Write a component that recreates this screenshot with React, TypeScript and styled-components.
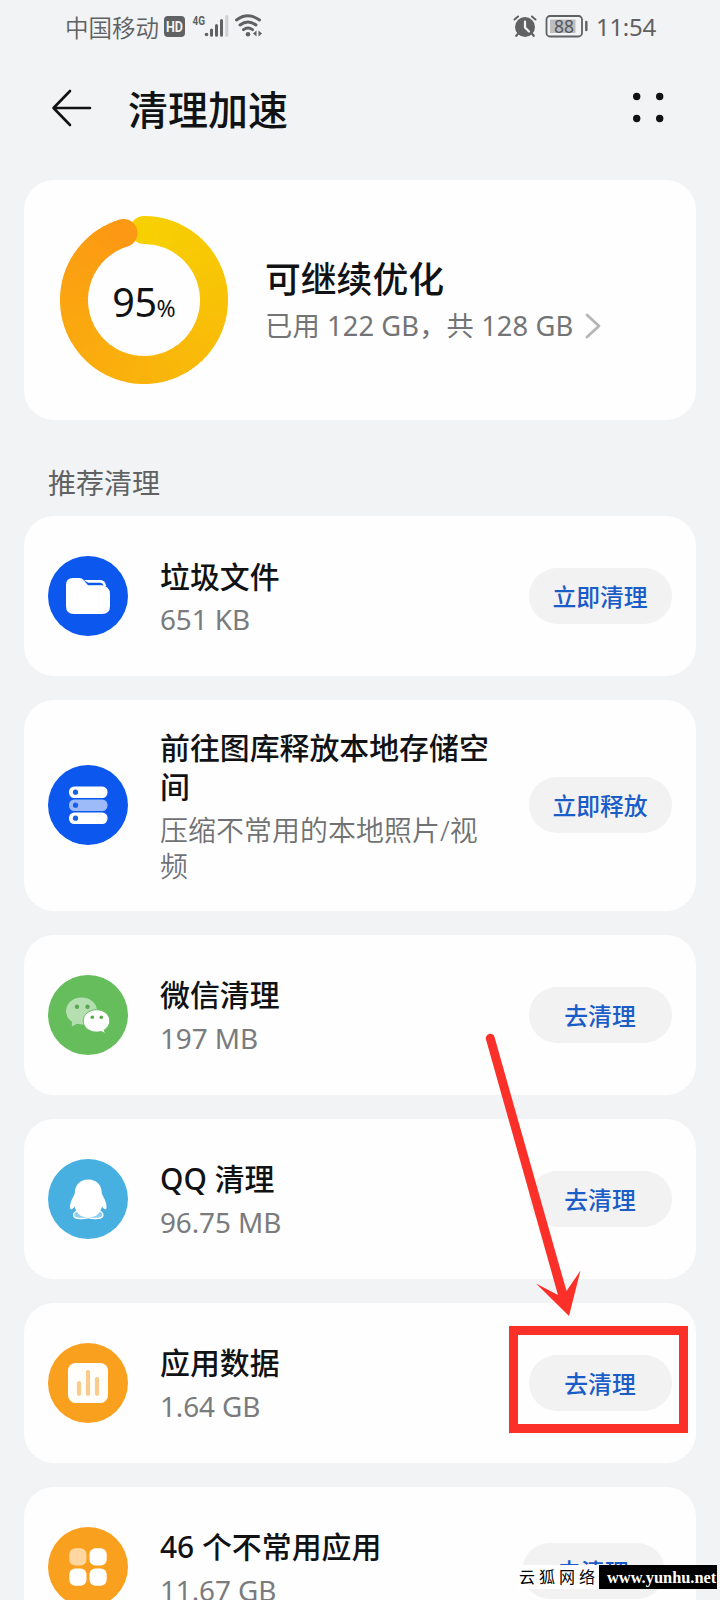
import React from "react";
import styled, { createGlobalStyle } from "styled-components";

const GlobalStyle = createGlobalStyle`
  * { box-sizing: border-box; }
  html, body { margin: 0; padding: 0; }
  body {
    background: #f1f3f5;
    font-family: "Noto Sans", "Noto Sans CJK SC", sans-serif;
    color: #111214;
    overflow: hidden;
  }
`;

const Screen = styled.div`
  position: relative;
  width: 720px;
  height: 1600px;
  overflow: hidden;
  background: #f1f3f5;
`;

const StatusBar = styled.header`
  display: flex;
  align-items: center;
  height: 54px;
  padding: 0 64px 0 65px;
  color: #606163;
`;

const Carrier = styled.span`
  width: 99px;
  font: 350 23.5px/30px "Noto Sans CJK SC", sans-serif;
  white-space: nowrap;
`;

const StatusIcons = styled.svg`
  display: block;
  flex: none;
`;

const Spacer = styled.div`
  flex: 1;
`;

const Clock = styled.span`
  width: 60px;
  margin-left: 8px;
  font: 400 24px/30px "Noto Sans", sans-serif;
  letter-spacing: -0.3px;
  white-space: nowrap;
`;

const TitleBar = styled.div`
  display: flex;
  align-items: center;
  height: 108px;
  padding: 0 55px 0 51px;
`;

const PageTitle = styled.h1`
  flex: 1;
  margin: 0 0 0 36px;
  font: 500 40px/52px "Noto Sans CJK SC", sans-serif;
`;

const Card = styled.section<{ $height: number }>`
  display: flex;
  align-items: center;
  height: ${(p) => p.$height}px;
  padding: 0 24px;
  border-radius: 30px;
  background: #fefefe;
`;

const SummaryCard = styled(Card)`
  margin: 18px 24px 0;
  padding: 0 36px;
`;

const Gauge = styled.div`
  display: grid;
  width: 168px;
  height: 168px;
  place-items: center;
  > * { grid-area: 1 / 1; }
`;

const GaugeValue = styled.div`
  padding-top: 9px;
  font: 400 39.5px/48px "Noto Sans", sans-serif;
  letter-spacing: -0.5px;
  white-space: nowrap;
`;

const Percent = styled.span`
  font-size: 23px;
  letter-spacing: 0;
`;

const SummaryText = styled.div`
  margin-left: 37px;
`;

const SummaryTitle = styled.h2`
  margin: 0;
  font: 500 35.8px/48px "Noto Sans CJK SC", sans-serif;
`;

const SummaryDetail = styled.p`
  display: flex;
  align-items: center;
  margin: 3px 0 0;
  color: #737476;
  font: 400 27.3px/44px "Noto Sans", "Noto Sans CJK SC", sans-serif;
  letter-spacing: 0.1px;
  white-space: nowrap;
  svg { margin-left: 12px; }
`;

const SectionTitle = styled.h3`
  margin: 0;
  height: 96px;
  padding: 42px 48px 0;
  color: #606163;
  font: 400 28px/40px "Noto Sans CJK SC", sans-serif;
`;

const List = styled.main`
  display: flex;
  flex-direction: column;
  gap: 24px;
  padding: 0 24px;
`;

const IconDisc = styled.div<{ $color: string }>`
  flex: none;
  width: 80px;
  height: 80px;
  border-radius: 50%;
  background: ${(p) => p.$color};
  svg { display: block; }
`;

const RowText = styled.div`
  width: 335px;
  margin-left: 32px;
  padding-top: 2px;
`;

const RowTitle = styled.div`
  font: 500 29.9px/39px "Noto Sans", "Noto Sans CJK SC", sans-serif;
`;

const RowDetail = styled.div<{ $light?: boolean }>`
  margin-top: 5.5px;
  color: ${(p) => (p.$light ? "#707173" : "#7a7b7d")};
  font: ${(p) => (p.$light ? 350 : 400)} 27.9px/36.5px "Noto Sans", "Noto Sans CJK SC", sans-serif;
  letter-spacing: ${(p) => (p.$light ? 0.1 : -0.1)}px;
`;

const ActionButton = styled.button<{ $shifted?: boolean }>`
  width: 143px;
  height: 56px;
  margin-left: auto;
  padding: 0 1px 0 0;
  border: 0;
  border-radius: 28px;
  background: #f2f2f2;
  color: #1a5cc8;
  font: 500 23.8px/56px "Noto Sans CJK SC", sans-serif;
  ${(p) => p.$shifted && "transform: translate(-7px, 4px);"}
`;

const Highlight = styled.div`
  position: absolute;
  left: 509px;
  top: 1326px;
  width: 179px;
  height: 107px;
  border: 9px solid #fb3028;
`;

const Pointer = styled.svg`
  position: absolute;
  left: 480px;
  top: 1025px;
`;

const Watermark = styled.footer`
  position: absolute;
  left: 516px;
  top: 1565px;
  display: flex;
  height: 24px;
  white-space: nowrap;
`;

const WatermarkName = styled.span`
  width: 83px;
  padding-left: 3px;
  background: #fff;
  color: #000;
  font: 400 16px/23px "Noto Sans CJK SC", serif;
  letter-spacing: 4px;
`;

const WatermarkUrl = styled.span`
  width: 118px;
  padding-left: 8px;
  background: #000;
  color: #fff;
  font: 700 16.4px/25px "Liberation Serif", serif;
`;

const FolderIcon = () => (
  <svg width="80" height="80" viewBox="0 0 80 80">
    <path d="M36 24h16.500q4.500 0 5.800 6L46 31z" fill="#fff" />
    <path d="M37 26.800h15.500q2 0 3.200 3H40z" fill="#0c58ef" />
    <path d="M18 29q0-7 7-7h6.500q2.300 0 3.800 1.800L40 29.300h12.500q9.500 0 9.500 9.500V50q0 8-8 8H26q-8 0-8-8z" fill="#fff" />
  </svg>
);

const StorageIcon = () => (
  <svg width="80" height="80" viewBox="0 0 80 80">
    {[21.5, 34.5, 47.5].map((y, i) => (
      <g key={y}>
        <rect x="21" y={y} width="38.5" height="11.5" rx="5.2" fill={i === 1 ? "#9dbbf8" : "#fff"} />
        <circle cx="27.5" cy={y + 5.7} r="2.6" fill="#1a5fe8" />
      </g>
    ))}
  </svg>
);

const WeChatIcon = () => (
  <svg width="80" height="80" viewBox="0 0 80 80">
    <path d="M33.5 22.5C24.5 22.5 18 28.5 18 36c0 4.500 2.300 8.300 6 10.800L23.800 51.500l5-2.800q7 1.800 12.500-.3C47 46 49 41 49 36c0-7.500-6.500-13.500-15.500-13.500z" fill="#b5dfb1" />
    <path d="M48.500 34.700c-7.500 0-13.300 5-13.300 11.200s5.800 11.200 13.300 11.200q2.500 0 4.600-.6l4.200 2-1-3.600c3.300-2 5.500-5.300 5.500-9 0-6.200-5.800-11.200-13.300-11.200z" fill="#fff" stroke="#65bd5c" strokeWidth="1" />
    <g fill="#58a950">
      <circle cx="29" cy="31.700" r="2.200" /><circle cx="39.500" cy="31.700" r="2.200" />
      <circle cx="44.300" cy="42.200" r="1.800" /><circle cx="53.300" cy="42.200" r="1.800" />
    </g>
  </svg>
);

const PenguinIcon = () => (
  <svg width="80" height="80" viewBox="0 0 80 80">
    <path d="M29 52c-3.500 1-4.300 4-2.500 6 1.500 1.800 9 2 13.700.6 4.700 1.400 12.300 1.200 13.800-.6 1.800-2 1-5-2.500-6z" fill="#8fcff0" stroke="#fff" strokeWidth="1.300" />
    <path d="M40.300 20.500C31 20.500 26.800 27 26.800 34.500c-2 4.500-5.300 9.500-4.700 14.500.3 2.300 2.500 1.500 4.400-1.500.8 3.500 3 7 6 9.300q7.800 3.400 15.600 0c3-2.300 5.200-5.800 6-9.300 1.900 3 4.100 3.800 4.400 1.500.6-5-2.700-10-4.700-14.500 0-7.500-4.200-14-13.500-14z" fill="#fff" />
  </svg>
);

const ChartIcon = () => (
  <svg width="80" height="80" viewBox="0 0 80 80">
    <rect x="20" y="20" width="40" height="40" rx="7.500" fill="#fffefb" />
    <g stroke="#f9cb8c" strokeWidth="4.200" strokeLinecap="round">
      <path d="M31 40v11M40 29v22M49 36v15" />
    </g>
  </svg>
);

const AppsIcon = () => (
  <svg width="80" height="80" viewBox="0 0 80 80" fill="#fff">
    <rect x="21.300" y="21.300" width="17.200" height="17.200" rx="6" fill="#fdd6a0" />
    <rect x="41.500" y="21.300" width="17.200" height="17.200" rx="6" />
    <rect x="21.300" y="41.500" width="17.200" height="17.200" rx="6" />
    <rect x="41.500" y="41.500" width="17.200" height="17.200" rx="6" />
  </svg>
);

type Item = {
  title: string;
  detail: string;
  action: string;
  color: string;
  icon: React.ReactNode;
  height?: number;
  light?: boolean;
  shifted?: boolean;
};

const items: Item[] = [
  { title: "垃圾文件", detail: "651 KB", action: "立即清理", color: "#0c58ef", icon: <FolderIcon /> },
  { title: "前往图库释放本地存储空间", detail: "压缩不常用的本地照片/视频", action: "立即释放", color: "#0c58ef", icon: <StorageIcon />, height: 210.5, light: true },
  { title: "微信清理", detail: "197 MB", action: "去清理", color: "#65bd5c", icon: <WeChatIcon /> },
  { title: "QQ 清理", detail: "96.75 MB", action: "去清理", color: "#47b0e0", icon: <PenguinIcon /> },
  { title: "应用数据", detail: "1.64 GB", action: "去清理", color: "#f9a01f", icon: <ChartIcon /> },
  { title: "46 个不常用应用", detail: "11.67 GB", action: "去清理", color: "#f9a01f", icon: <AppsIcon />, shifted: true },
];

const polar = (deg: number) => {
  const a = (deg * Math.PI) / 180;
  return [84 + 70 * Math.sin(a), 84 - 70 * Math.cos(a)];
};

const mix = (t: number) => {
  const from = [247, 208, 2];
  const to = [252, 152, 20];
  return `rgb(${from.map((c, i) => Math.round(c + (to[i] - c) * t)).join(",")})`;
};

const Ring = () => {
  const steps = 86;
  const span = 343;
  return (
    <svg width="168" height="168" viewBox="0 0 168 168" fill="none" strokeWidth="28">
      <circle cx={polar(0)[0]} cy={polar(0)[1]} r="14" fill={mix(0)} />
      {Array.from({ length: steps }, (_, i) => {
        const [x1, y1] = polar((i * span) / steps);
        const [x2, y2] = polar(((i + 1) * span) / steps + (i < steps - 1 ? 0.6 : 0));
        return <path key={i} d={`M${x1} ${y1}A70 70 0 0 1 ${x2} ${y2}`} stroke={mix(i / steps)} />;
      })}
      <circle cx={polar(span)[0]} cy={polar(span)[1]} r="14" fill={mix(1)} />
    </svg>
  );
};

const SignalIcons = () => (
  <StatusIcons width="100" height="30" viewBox="0 0 100 30" fill="#606163">
    <rect x="0" y="4" width="21" height="21" rx="4" />
    <text x="10.500" y="19.500" fontSize="14" fontWeight="700" fill="#f1f3f5" textAnchor="middle" fontFamily="Roboto" textLength="17" lengthAdjust="spacingAndGlyphs">HD</text>
    <text x="28.500" y="12.700" fontSize="12.500" fontWeight="700" fontFamily="Roboto" textLength="12.500" lengthAdjust="spacingAndGlyphs">4G</text>
    <circle cx="42.500" cy="22.500" r="1.800" />
    <g stroke="#606163" strokeWidth="3" strokeLinecap="round">
      <path d="M47.500 18v5.200M52.500 13.500v9.700M57.500 8.500v14.700" />
      <path d="M62.800 4.500v18.700" stroke="#cfd0d2" />
    </g>
    <g fill="none" stroke="#606163" strokeWidth="2.900" strokeLinecap="round">
      <path d="M72.500 8q11.500-8.300 23 0M76 13q8-6 16 0M79.500 17.700q4.500-3.500 9 0" />
    </g>
    <circle cx="84" cy="22.300" r="2.300" />
    <path d="M92.500 18.500v6l-3.500-3zM94.500 18.500v6l3.500-3z" />
  </StatusIcons>
);

const DeviceIcons = () => (
  <StatusIcons width="76" height="30" viewBox="0 0 76 30" fill="none" stroke="#606163">
    <circle cx="13" cy="15" r="10" fill="#606163" stroke="none" />
    <path d="M2.500 7.500l3.600-3M23.500 7.500l-3.600-3" strokeWidth="2" strokeLinecap="round" />
    <path d="M5.800 22l-1.500 1.800M20.200 22l1.500 1.800" strokeWidth="2.200" strokeLinecap="round" />
    <path d="M13 9.500v6l4 4" stroke="#f1f3f5" strokeWidth="2.200" strokeLinecap="round" />
    <rect x="34.500" y="4" width="35.500" height="20.500" rx="3.500" strokeWidth="1.800" />
    <rect x="38" y="7.500" width="25.500" height="13.500" fill="#bdbebf" stroke="none" />
    <path d="M74.300 10v8" strokeWidth="2.400" strokeLinecap="round" />
    <text x="52" y="20.700" fontSize="17.500" fontFamily="Noto Sans" fontWeight="400" fill="#55565a" stroke="none" textAnchor="middle">88</text>
  </StatusIcons>
);

export default function App() {
  return (
    <>
      <GlobalStyle />
      <Screen>
        <StatusBar>
          <Carrier>中国移动</Carrier>
          <SignalIcons />
          <Spacer />
          <DeviceIcons />
          <Clock>11:54</Clock>
        </StatusBar>
        <TitleBar>
          <svg width="41" height="38" viewBox="0 0 41 38" fill="none" stroke="#111214" strokeWidth="2.600" strokeLinecap="round" strokeLinejoin="round">
            <path d="M39 19H2.500M19 2L2.500 19 19 36" />
          </svg>
          <PageTitle>清理加速</PageTitle>
          <svg width="32" height="32" viewBox="0 0 32 32" fill="#111214">
            <circle cx="3.700" cy="4.500" r="3.700" /><circle cx="26.700" cy="4.500" r="3.700" />
            <circle cx="3.700" cy="26.500" r="3.700" /><circle cx="26.700" cy="26.500" r="3.700" />
          </svg>
        </TitleBar>
        <SummaryCard $height={240}>
          <Gauge>
            <Ring />
            <GaugeValue>95<Percent>%</Percent></GaugeValue>
          </Gauge>
          <SummaryText>
            <SummaryTitle>可继续优化</SummaryTitle>
            <SummaryDetail>
              已用 122 GB，共 128 GB
              <svg width="16" height="26" viewBox="0 0 16 26" fill="none" stroke="#b4b5b7" strokeWidth="2.800" strokeLinecap="round" strokeLinejoin="round">
                <path d="M2 2l12 11L2 24" />
              </svg>
            </SummaryDetail>
          </SummaryText>
        </SummaryCard>
        <SectionTitle>推荐清理</SectionTitle>
        <List>
          {items.map((item) => (
            <Card key={item.title} $height={item.height ?? 160}>
              <IconDisc $color={item.color}>{item.icon}</IconDisc>
              <RowText>
                <RowTitle>{item.title}</RowTitle>
                <RowDetail $light={item.light}>{item.detail}</RowDetail>
              </RowText>
              <ActionButton $shifted={item.shifted}>{item.action}</ActionButton>
            </Card>
          ))}
        </List>
        <Pointer width="110" height="300" viewBox="480 1025 110 300" fill="#fb3028">
          <path d="M486 1039.500a4.400 4.400 0 0 1 8.500-2.500L566.500 1291l14-20.500L569 1316l-33-32.500 22 11.500z" />
        </Pointer>
        <Highlight />
        <Watermark>
          <WatermarkName>云狐网络</WatermarkName>
          <WatermarkUrl>www.yunhu.net</WatermarkUrl>
        </Watermark>
      </Screen>
    </>
  );
}
